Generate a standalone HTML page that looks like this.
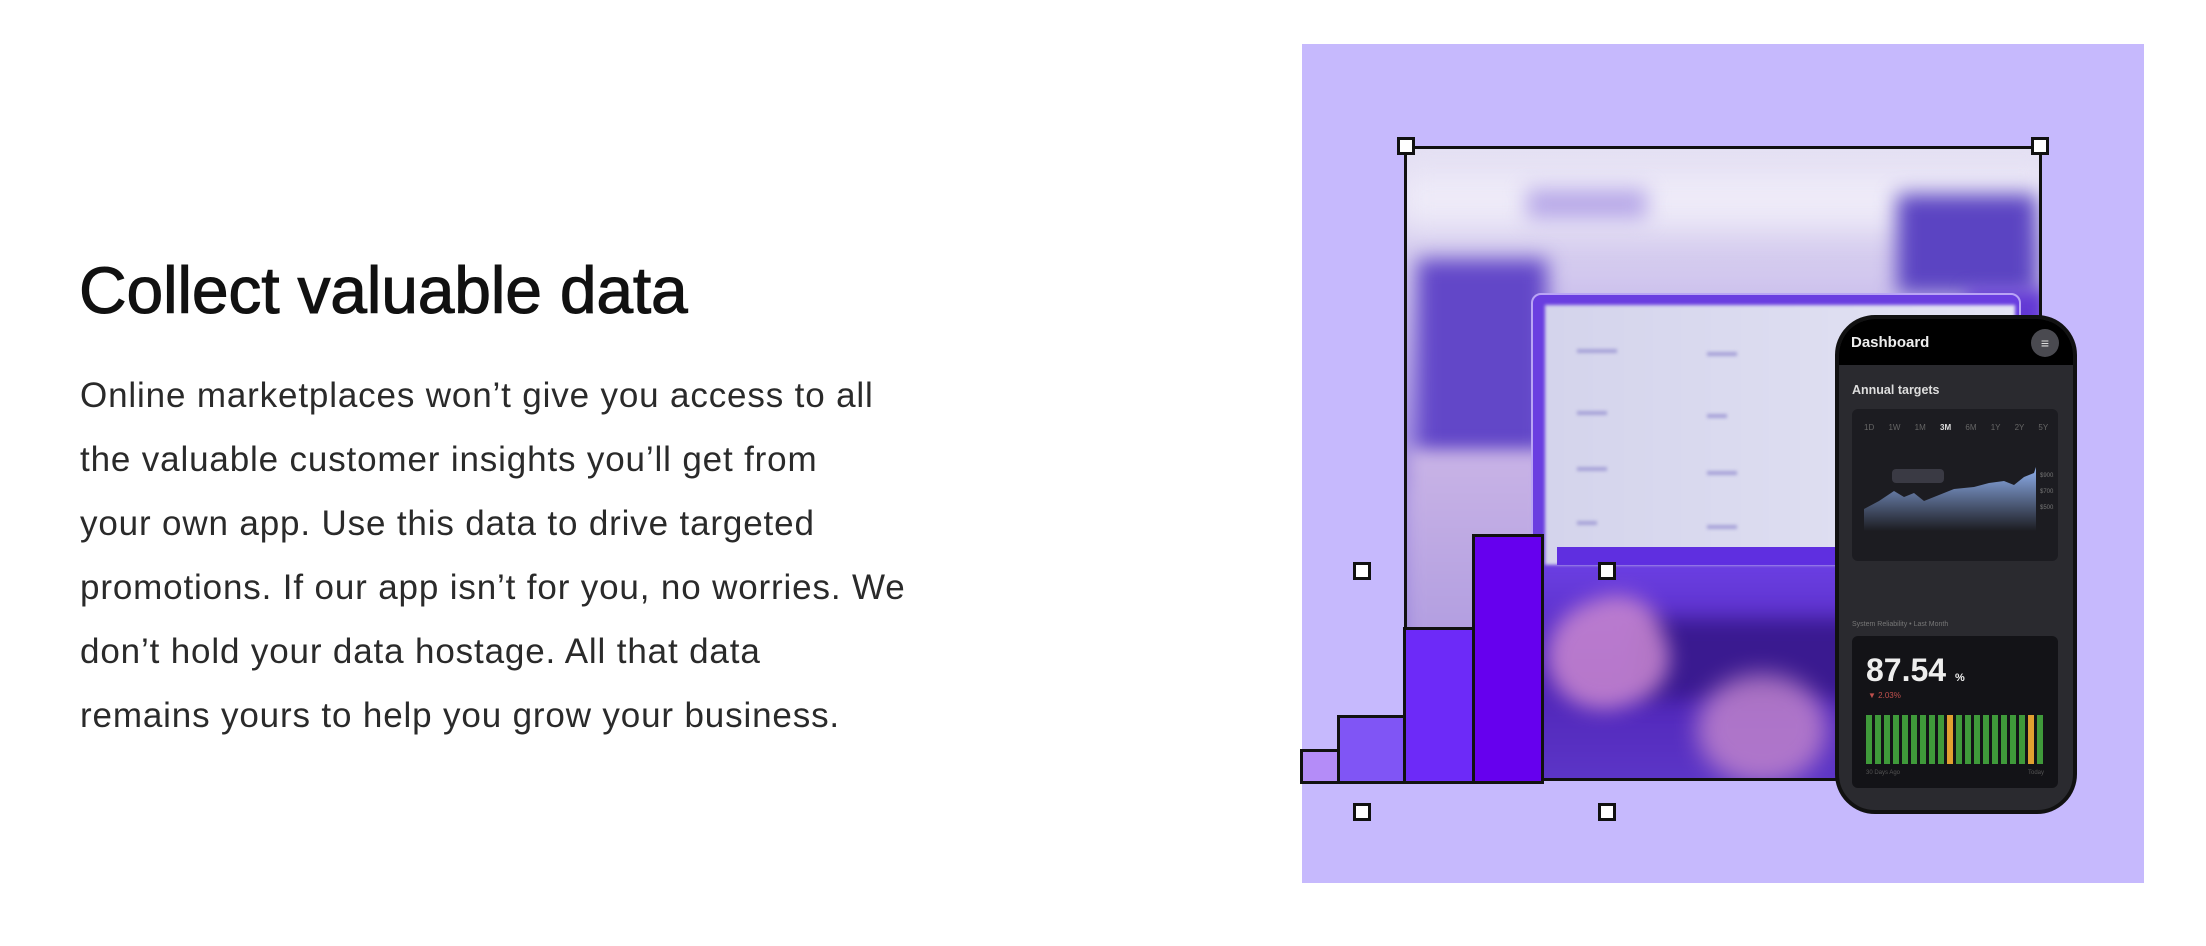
<!DOCTYPE html>
<html><head><meta charset="utf-8"><style>
*{margin:0;padding:0;box-sizing:border-box}
body{width:2206px;height:946px;background:#fff;position:relative;overflow:hidden;font-family:"Liberation Sans",sans-serif}
.h{position:absolute;left:79px;top:251px;font-size:66px;line-height:78px;color:#111;-webkit-text-stroke:1px #111;letter-spacing:-0.2px;white-space:nowrap}
.p{position:absolute;left:80px;top:364px;font-size:35px;line-height:64px;color:#2a2a2a;letter-spacing:0.85px;white-space:nowrap}
.abs{position:absolute}
.hd{position:absolute;width:18px;height:18px;background:#fff;border:3px solid #111;z-index:9}
</style></head><body>
<div class="h">Collect valuable data</div>
<div class="p">Online marketplaces won’t give you access to all<br>the valuable customer insights you’ll get from<br>your own app. Use this data to drive targeted<br>promotions. If our app isn’t for you, no worries. We<br>don’t hold your data hostage. All that data<br>remains yours to help you grow your business.</div>

<div class="abs" style="left:1302px;top:44px;width:842px;height:839px;background:#c6b9fd"></div>

<!-- photo frame -->
<div class="abs" style="left:1404px;top:146px;width:638px;height:635px;border:3px solid #111;overflow:hidden;background:linear-gradient(#e4e0f3 0%,#d2c8ee 20%,#a996e4 45%,#8e76d8 100%)">
  <div class="abs" style="left:-10px;top:20px;width:660px;height:60px;background:#eeebf8;filter:blur(16px)"></div>
  <div class="abs" style="left:120px;top:40px;width:120px;height:30px;background:#b7a8e8;filter:blur(10px)"></div>
  <div class="abs" style="left:10px;top:110px;width:130px;height:230px;background:#6247c8;filter:blur(10px)"></div>
  <div class="abs" style="left:0;top:300px;width:140px;height:340px;background:linear-gradient(#c9b4e6,#b09ce0 60%,#8a70d8);filter:blur(8px)"></div>
  <div class="abs" style="left:490px;top:45px;width:140px;height:100px;background:#5b44c2;filter:blur(10px)"></div>
  <div class="abs" style="left:560px;top:140px;width:80px;height:160px;background:#6238d4;filter:blur(8px)"></div>
  <!-- laptop -->
  <div class="abs" style="left:124px;top:144px;width:490px;height:300px;background:#6a3ee0;border-radius:10px;border:2px solid #b9a4f5"></div>
  <div class="abs" style="left:138px;top:156px;width:470px;height:260px;background:linear-gradient(90deg,#d4d4ec,#e4e4f4);filter:blur(1.5px)"></div>
  <div class="abs" style="left:170px;top:200px;width:40px;height:4px;background:#a7a3d8;filter:blur(1.5px)"></div>
  <div class="abs" style="left:300px;top:203px;width:30px;height:4px;background:#a7a3d8;filter:blur(1.5px)"></div>
  <div class="abs" style="left:170px;top:262px;width:30px;height:4px;background:#a7a3d8;filter:blur(1.5px)"></div>
  <div class="abs" style="left:300px;top:265px;width:20px;height:4px;background:#a7a3d8;filter:blur(1.5px)"></div>
  <div class="abs" style="left:170px;top:318px;width:30px;height:4px;background:#a7a3d8;filter:blur(1.5px)"></div>
  <div class="abs" style="left:300px;top:322px;width:30px;height:4px;background:#a7a3d8;filter:blur(1.5px)"></div>
  <div class="abs" style="left:170px;top:372px;width:20px;height:4px;background:#a7a3d8;filter:blur(1.5px)"></div>
  <div class="abs" style="left:300px;top:376px;width:30px;height:4px;background:#a7a3d8;filter:blur(1.5px)"></div>
  <div class="abs" style="left:150px;top:398px;width:460px;height:18px;background:#5f2fe0"></div>
  <!-- keyboard -->
  <div class="abs" style="left:100px;top:420px;width:540px;height:220px;background:linear-gradient(#6a3ee0,#4f24b8 50%,#5d37c8);filter:blur(3px)"></div>
  <div class="abs" style="left:230px;top:470px;width:300px;height:80px;background:#3a1a90;filter:blur(10px)"></div>
  <!-- hands -->
  <div class="abs" style="left:140px;top:450px;width:120px;height:110px;background:#c987cf;border-radius:50% 40% 40% 50%;filter:blur(10px);transform:rotate(-20deg);opacity:.85"></div>
  <div class="abs" style="left:290px;top:525px;width:130px;height:110px;background:#c487cc;border-radius:50%;filter:blur(12px);opacity:.8"></div>
</div>

<!-- bars -->
<div class="abs" style="left:1300px;top:749px;width:40px;height:35px;background:#b48cf8;border:3px solid #111"></div>
<div class="abs" style="left:1337px;top:715px;width:69px;height:69px;background:#8055f5;border:3px solid #111"></div>
<div class="abs" style="left:1403px;top:627px;width:72px;height:157px;background:#6d2af8;border:3px solid #111"></div>
<div class="abs" style="left:1472px;top:534px;width:72px;height:250px;background:#6600ee;border:3px solid #111"></div>

<!-- handles -->
<div class="hd" style="left:1397px;top:137px"></div>
<div class="hd" style="left:2031px;top:137px"></div>
<div class="hd" style="left:1353px;top:562px"></div>
<div class="hd" style="left:1598px;top:562px"></div>
<div class="hd" style="left:1353px;top:803px"></div>
<div class="hd" style="left:1598px;top:803px"></div>

<!-- phone -->
<div class="abs" style="left:1835px;top:315px;width:242px;height:499px;border-radius:40px;background:#2a2a2f;border:4px solid #111;overflow:hidden;z-index:5">
  <div class="abs" style="left:0;top:0;width:100%;height:46px;background:#000"></div>
  <div class="abs" style="left:12px;top:15px;color:#eee;font-weight:bold;font-size:15px">Dashboard</div>
  <div class="abs" style="left:192px;top:10px;width:28px;height:28px;border-radius:50%;background:#4a4a50;color:#ddd;font-size:14px;text-align:center;line-height:28px">≡</div>
  <div class="abs" style="left:13px;top:64px;color:#ddd;font-size:12.5px;font-weight:bold">Annual targets</div>
  <div class="abs" style="left:13px;top:90px;width:206px;height:152px;background:#1c1c21;border-radius:6px">
    <div class="abs" style="left:12px;top:14px;width:185px;font-size:8px;color:#666;word-spacing:12px;white-space:nowrap">1D 1W 1M <b style="color:#ddd">3M</b> 6M 1Y 2Y 5Y</div>
    <svg class="abs" style="left:12px;top:50px" width="190" height="80" viewBox="0 0 190 80">
      <defs><linearGradient id="g" x1="0" y1="0" x2="0" y2="1"><stop offset="0" stop-color="#8fb0ee"/><stop offset="1" stop-color="#1c1c21"/></linearGradient></defs>
      <path d="M0 50 L15 42 L30 32 L40 38 L50 34 L60 42 L75 36 L90 30 L110 28 L125 24 L140 22 L150 26 L160 18 L170 14 L172 8 L172 72 L0 72Z" fill="url(#g)"/>
      <rect x="28" y="10" width="52" height="14" rx="4" fill="#3a3a44"/>
      <text x="176" y="18" font-size="6" fill="#777" font-family="Liberation Sans">$900.00</text>
      <text x="176" y="34" font-size="6" fill="#777" font-family="Liberation Sans">$700.00</text>
      <text x="176" y="50" font-size="6" fill="#777" font-family="Liberation Sans">$500.00</text>
    </svg>
  </div>
  <div class="abs" style="left:13px;top:302px;color:#777;font-size:7px">System Reliability • Last Month</div>
  <div class="abs" style="left:13px;top:317px;width:206px;height:152px;background:#131317;border-radius:6px">
    <div class="abs" style="left:14px;top:16px;color:#eee;font-weight:bold;font-size:32px">87.54 <span style="font-size:11px">%</span></div>
    <div class="abs" style="left:16px;top:55px;color:#c0504d;font-size:8px">▼ 2.03%</div>
    <div class="abs" style="left:14px;top:79px;display:flex;gap:3px">
      <i style="width:6px;height:49px;background:#3f9a3a"></i><i style="width:6px;height:49px;background:#3f9a3a"></i><i style="width:6px;height:49px;background:#3f9a3a"></i><i style="width:6px;height:49px;background:#3f9a3a"></i><i style="width:6px;height:49px;background:#3f9a3a"></i><i style="width:6px;height:49px;background:#3f9a3a"></i><i style="width:6px;height:49px;background:#3f9a3a"></i><i style="width:6px;height:49px;background:#3f9a3a"></i><i style="width:6px;height:49px;background:#3f9a3a"></i><i style="width:6px;height:49px;background:#e0a030"></i><i style="width:6px;height:49px;background:#3f9a3a"></i><i style="width:6px;height:49px;background:#3f9a3a"></i><i style="width:6px;height:49px;background:#3f9a3a"></i><i style="width:6px;height:49px;background:#3f9a3a"></i><i style="width:6px;height:49px;background:#3f9a3a"></i><i style="width:6px;height:49px;background:#3f9a3a"></i><i style="width:6px;height:49px;background:#3f9a3a"></i><i style="width:6px;height:49px;background:#3f9a3a"></i><i style="width:6px;height:49px;background:#e0a030"></i><i style="width:6px;height:49px;background:#3f9a3a"></i>
    </div>
    <div class="abs" style="left:14px;top:134px;color:#555;font-size:6px">30 Days Ago</div>
    <div class="abs" style="left:176px;top:134px;color:#555;font-size:6px">Today</div>
  </div>
</div>
</body></html>
